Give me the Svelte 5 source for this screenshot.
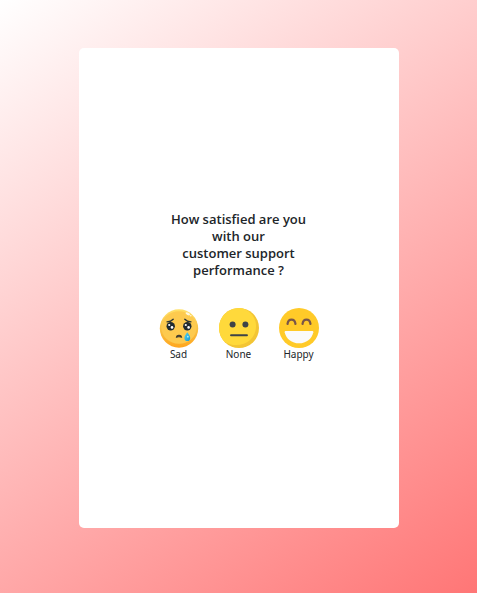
<script>
  let selected = $state('');
</script>

<main>
  <section class="card">
    <h1>How satisfied are you with our<br />customer support performance ?</h1>
    <div class="faces">
      <button type="button" aria-pressed={selected === 'sad'} onclick={() => (selected = 'sad')}>
        <svg viewBox="0 0 40 40" aria-hidden="true">
          <defs>
            <linearGradient id="sad-rim" x1="0" y1="0" x2="0" y2="1">
              <stop offset="0" stop-color="#ffe168" />
              <stop offset="0.5" stop-color="#f8c145" />
              <stop offset="1" stop-color="#ffa61e" />
            </linearGradient>
            <linearGradient id="sad-tear" x1="0" y1="0" x2="1" y2="1">
              <stop offset="0" stop-color="#4fd2ed" />
              <stop offset="1" stop-color="#1597d3" />
            </linearGradient>
          </defs>
          <circle cx="20" cy="20.5" r="19.2" fill="url(#sad-rim)" />
          <ellipse cx="20" cy="19.5" rx="17.6" ry="16.2" fill="#fdca4e" />
          <ellipse cx="28.8" cy="5.8" rx="2.4" ry="1.2" transform="rotate(25 28.8 5.8)" fill="#fff8de" />
          <circle cx="31.8" cy="7.8" r="0.8" fill="#fff8de" />
          <g fill="none" stroke="#283334" stroke-width="1.3" stroke-linecap="round">
            <path d="M8 13.800q4 0 6.200-2.500M25.800 11.300q2.200 2.500 6.200 2.500" />
          </g>
          <circle cx="11.7" cy="18.2" r="4.2" fill="#202b30" />
          <circle cx="28.3" cy="18.2" r="4.2" fill="#202b30" />
          <g fill="#fff">
            <circle cx="10.2" cy="17" r="1.1" />
            <circle cx="13" cy="19.4" r="1.3" />
            <circle cx="26.8" cy="17" r="1.1" />
            <circle cx="29.6" cy="19.4" r="1.3" />
          </g>
          <path d="M17.2 29.5q0-2.4 2.8-2.4t2.8 2.4q-2.8-1.4-5.600 0z" fill="#3c3a2f" stroke="#3c3a2f" stroke-width="0.7" stroke-linejoin="round" />
          <path d="M28.300 24.200c1.500 2.200 2.900 3.800 2.900 5.700a2.900 3.100 0 0 1-5.800 0c0-1.900 1.400-3.500 2.900-5.700z" fill="url(#sad-tear)" />
          <circle cx="28.8" cy="28.7" r="0.9" fill="#a9f0fa" />
        </svg>
        Sad
      </button>
      <button type="button" aria-pressed={selected === 'none'} onclick={() => (selected = 'none')}>
        <svg viewBox="0 0 40 40" aria-hidden="true">
          <circle cx="20" cy="20" r="20" fill="#f3c534" />
          <path d="M20 0c8 0 17 7 17 18 0 12-9 19-20 19-6 0-10-2-12.500-4.300A20 20 0 0 1 20 0z" fill="#ffd93b" />
          <circle cx="13.600" cy="16.500" r="3" fill="#3e4347" />
          <circle cx="26.400" cy="16.500" r="3" fill="#3e4347" />
          <path d="M12 27.200h16" stroke="#3e4347" stroke-width="1.900" stroke-linecap="round" />
        </svg>
        None
      </button>
      <button type="button" aria-pressed={selected === 'happy'} onclick={() => (selected = 'happy')}>
        <svg viewBox="0 0 40 40" aria-hidden="true">
          <circle cx="20" cy="20" r="20" fill="#ffca28" />
          <path d="M8.500 16c.8-5.800 7.200-5.800 8 0M23.500 16c.8-5.800 7.200-5.800 8 0" fill="none" stroke="#795548" stroke-width="2.200" stroke-linecap="round" />
          <path d="M6.500 23h27q1 0 .8 1.200C33.100 30.800 27 35.300 20 35.300S6.900 30.800 5.700 24.200Q5.500 23 6.500 23z" fill="#fafafa" />
        </svg>
        Happy
      </button>
    </div>
  </section>
</main>

<style>
  :global(body) {
    margin: 0;
  }

  main {
    box-sizing: border-box;
    min-height: 100vh;
    padding: 48px 16px;
    background: linear-gradient(145deg, #ffffff, #ff7676);
    font-family: 'Noto Sans', 'Open Sans', sans-serif;
    color: #212529;
  }

  .card {
    box-sizing: border-box;
    display: flex;
    flex-direction: column;
    align-items: center;
    justify-content: center;
    gap: 29px;
    max-width: 320px;
    min-height: 480px;
    margin: 0 auto;
    padding: 16px 16px 22px;
    border-radius: 5px;
    background: #fff;
  }

  h1 {
    max-width: 150px;
    margin: 0;
    font-family: 'Open Sans', 'Noto Sans', sans-serif;
    font-size: 13px;
    line-height: 17px;
    font-weight: 600;
    text-align: center;
  }

  .faces {
    display: flex;
    gap: 20px;
  }

  button {
    display: flex;
    flex-direction: column;
    align-items: center;
    width: 40px;
    padding: 0;
    border: 0;
    background: none;
    color: inherit;
    font-family: inherit;
    font-size: 10px;
    line-height: 12px;
    cursor: pointer;
  }

  svg {
    display: block;
    width: 40px;
    height: 40px;
  }
</style>
